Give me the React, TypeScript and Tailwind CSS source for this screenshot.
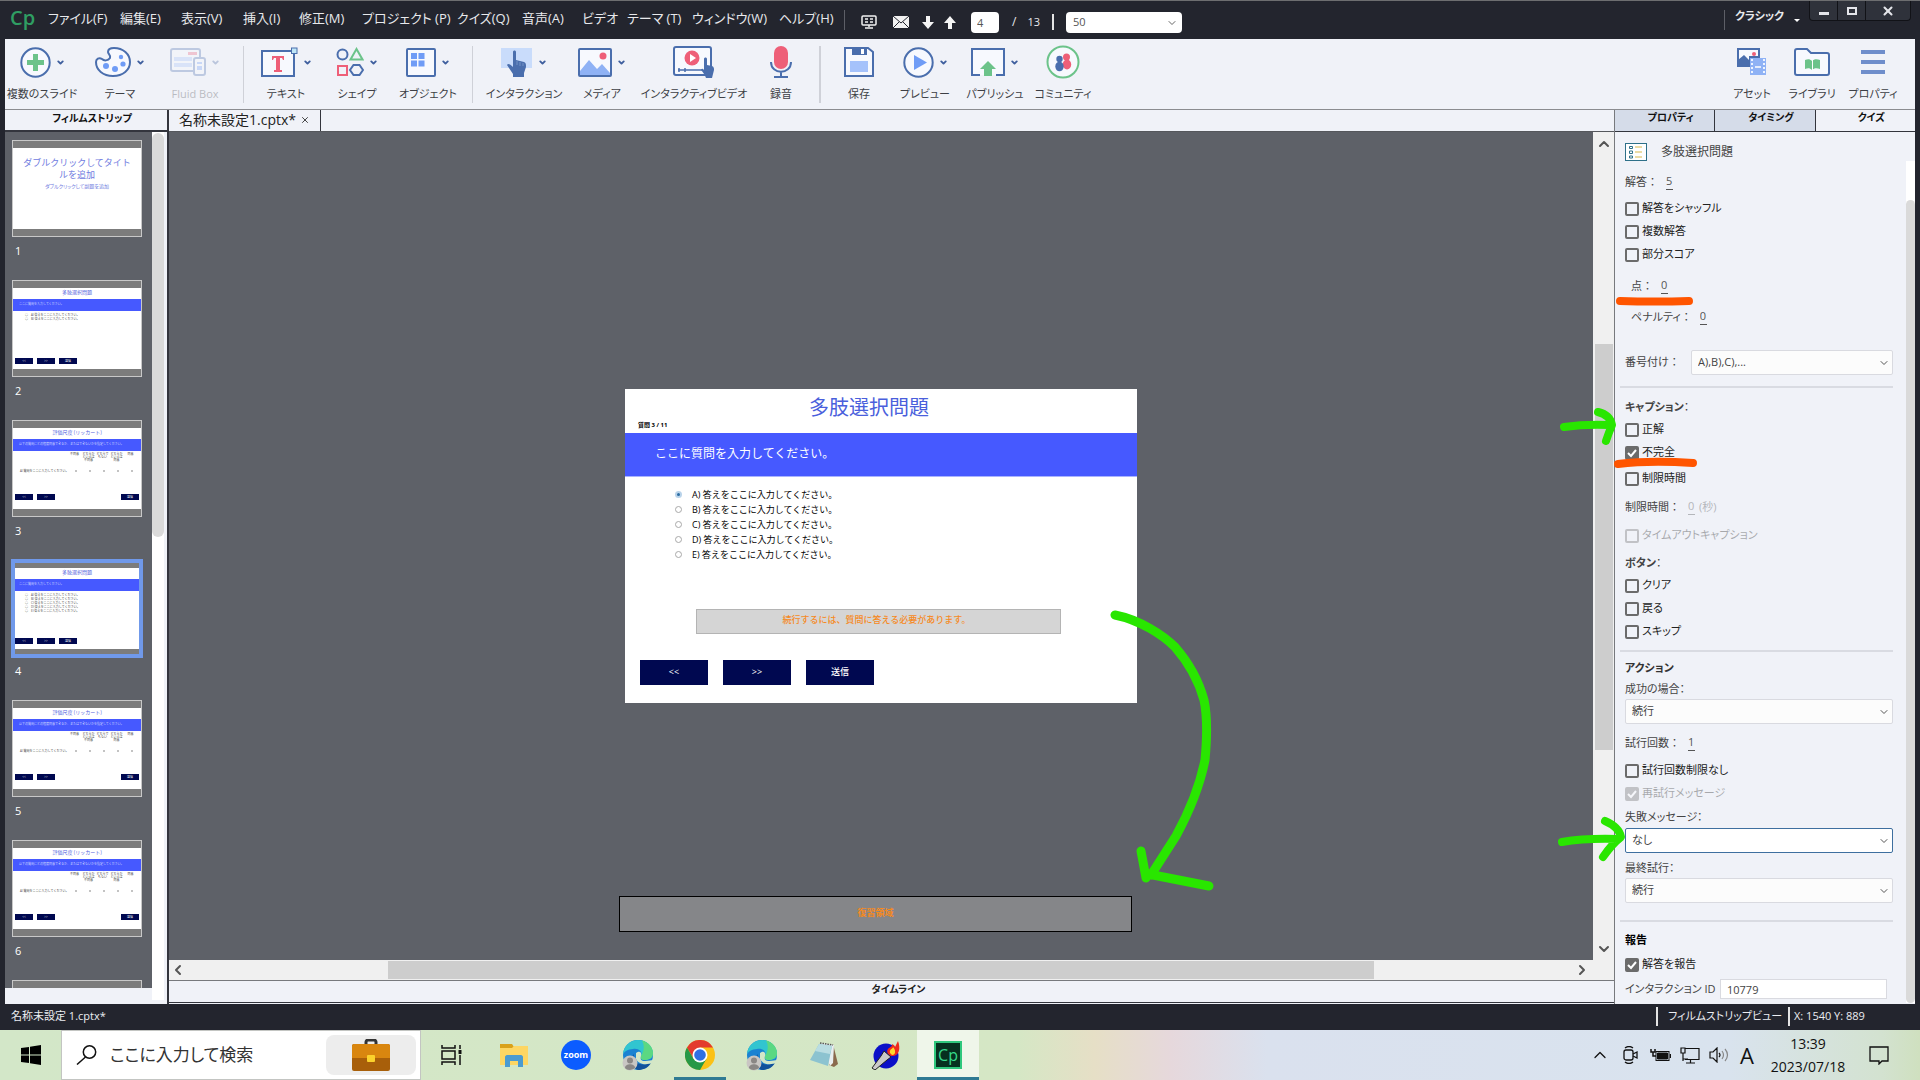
import type { ReactNode } from "react";
import { ChevronDown, ChevronLeft, ChevronRight, ChevronUp, X } from "lucide-react";

const BLUE = "#4a6ead";
const SKY = "#a5c2fb";
const RED = "#ee5f78";
const GREEN = "#6cc38a";

const menus = [
  { label: "ファイル(F)", width: "w-[72px]" },
  { label: "編集(E)", width: "w-[61px]" },
  { label: "表示(V)", width: "w-[62px]" },
  { label: "挿入(I)", width: "w-[56px]" },
  { label: "修正(M)", width: "w-[63px]" },
  { label: "プロジェクト (P)", width: "w-[95px]" },
  { label: "クイズ(Q)", width: "w-[65px]" },
  { label: "音声(A)", width: "w-[60px]" },
  { label: "ビデオ", width: "w-[45px]" },
  { label: "テーマ (T)", width: "w-[65px]" },
  { label: "ウィンドウ(W)", width: "w-[87px]" },
  { label: "ヘルプ(H)", width: "w-[65px]" },
];

const TitleBar = () => (
  <header className="flex h-[39px] shrink-0 items-start border-t border-[#6d6e70] bg-[#23252e] text-[13px] text-[#e8e9ec]">
    <span className="w-12 shrink-0 pl-[10px] text-xl leading-[34px] font-semibold text-[#2f9e63]">Cp</span>
    <nav className="flex">
      {menus.map((menu) => (
        <button key={menu.label} className={`h-9 shrink-0 text-left whitespace-nowrap ${menu.width}`}>
          {menu.label}
        </button>
      ))}
    </nav>
    <div className="mt-[9px] h-5 w-px bg-[#5d5f67]" />
    <div className="flex h-[42px] items-center text-xs">
      <button aria-label="レイアウト" className="ml-4">
        <svg width="16" height="14" viewBox="0 0 16 14" fill="none" stroke="#f2f2f2" strokeWidth="1.5">
          <rect x="1" y="1" width="14" height="9" rx="1" />
          <path d="M4 4h3M9 4h3M4 7h3M9 7h3M8 10v2M4 13h8" />
        </svg>
      </button>
      <button aria-label="メール" className="ml-4">
        <svg width="16" height="12" viewBox="0 0 16 12">
          <path d="M0 0h16v12H0z" fill="#f2f2f2" />
          <path d="M0 0l8 7 8-7M0 12l6-6M16 12l-6-6" stroke="#23252e" fill="none" />
        </svg>
      </button>
      <button aria-label="次のスライド" className="ml-[13px]">
        <svg width="12" height="13" viewBox="0 0 12 13" fill="#f5f5f5">
          <path d="M4 0h4v6h4l-6 7-6-7h4z" />
        </svg>
      </button>
      <button aria-label="前のスライド" className="ml-[10px]">
        <svg width="12" height="13" viewBox="0 0 12 13" fill="#f5f5f5">
          <path d="M4 13h4V7h4L6 0 0 7h4z" />
        </svg>
      </button>
      <input
        aria-label="スライド番号"
        defaultValue="4"
        className="ml-[15px] h-[21px] w-7 rounded-sm bg-white pl-[6px] text-[11px] text-[#555]"
      />
      <span className="ml-[13px]">/</span>
      <span className="ml-[11px] text-[11px]">13</span>
      <div className="ml-3 h-4 w-[2px] bg-[#e4e4e4]" />
      <div className="relative ml-3">
        <select aria-label="ズーム" className="h-[21px] w-[116px] appearance-none rounded-sm bg-white pl-[7px] text-[11px] text-[#555]">
          <option>50</option>
        </select>
        <ChevronDown className="pointer-events-none absolute top-[5px] right-1 size-3 text-[#666]" />
      </div>
    </div>
    <div className="ml-auto flex items-start">
      <div className="mt-[9px] h-5 w-px bg-[#5d5f67]" />
      <button className="ml-[10px] h-[30px] w-[52px] text-left text-[11px] font-bold whitespace-nowrap">クラシック</button>
      <span className="mt-[18px] ml-[7px] mr-[9px] border-x-3 border-t-3 border-x-transparent border-t-white" />
      <div className="mr-[9px] flex h-5 rounded-b-sm border border-t-0 border-[#111217] bg-[#2f323b] text-[#e4e5ea]">
        <button aria-label="最小化" className="flex w-7 items-end justify-center border-r border-[#111217] pb-[5px]">
          <span className="h-[3px] w-[10px] bg-[#e4e5ea]" />
        </button>
        <button aria-label="最大化" className="flex w-7 items-center justify-center border-r border-[#111217]">
          <span className="h-2 w-[10px] border-2 border-[#e4e5ea]" />
        </button>
        <button aria-label="閉じる" className="flex w-11 items-center justify-center">
          <X className="size-[14px]" strokeWidth={3.5} />
        </button>
      </div>
    </div>
  </header>
);

interface ToolProps {
  label: string;
  width: string;
  menu?: boolean;
  disabled?: boolean;
  children: ReactNode;
}

const Tool = ({ label, width, menu, disabled, children }: ToolProps) => (
  <button disabled={disabled} className={`flex shrink-0 flex-col items-center pt-[7px] ${width} ${disabled ? "opacity-30" : ""}`}>
    <span className="flex h-8 items-center gap-[5px]">
      {children}
      {menu && <ChevronDown className="size-[9px] text-[#3f5f9e]" strokeWidth={5} />}
    </span>
    <span className="mt-2 text-[11px] leading-4 whitespace-nowrap text-[#3d3f45]">{label}</span>
  </button>
);

const Toolbar = () => (
  <div className="flex h-[71px] shrink-0 border-b border-[#8b8c90] bg-[#f0f2f8]">
    <Tool label="複数のスライド" width="w-[74px]" menu>
      <svg width="31" height="31" viewBox="0 0 31 31">
        <circle cx="15.5" cy="15.5" r="14.2" fill="#f7f9fe" stroke={BLUE} strokeWidth="2" />
        <path d="M13 7h5v6h6v5h-6v6h-5v-6H7v-5h6z" fill={GREEN} />
      </svg>
    </Tool>
    <Tool label="テーマ" width="w-[82px]" menu>
      <svg width="36" height="30" viewBox="0 0 36 30">
        <path
          d="M19 1c9 0 16 6 16 14 0 8-7 14-17 14C8 29 1 23 1 15c0-3 3-5 6-3 2 2 6 2 8-1 1-3-2-4-2-6 0-3 3-4 6-4z"
          fill="#f7f9fe"
          stroke={BLUE}
          strokeWidth="2"
        />
        <g fill="#6f9cf6">
          <circle cx="11" cy="19" r="3" />
          <circle cx="20" cy="22" r="3" />
          <circle cx="28" cy="17" r="2.6" />
          <circle cx="26" cy="10" r="2.2" />
        </g>
      </svg>
    </Tool>
    <Tool label="Fluid Box" width="w-[68px]" menu disabled>
      <svg width="36" height="30" viewBox="0 0 36 30">
        <rect x="1" y="2" width="29" height="22" rx="2" fill="#f7f9fe" stroke={BLUE} strokeWidth="2" />
        <path d="M4 10h18v4H4zM4 16h18v4H4z" fill={SKY} />
        <path d="M18 5h9v3h-9z" fill={RED} />
        <rect x="24" y="11" width="11" height="17" rx="2" fill="#f7f9fe" stroke={BLUE} strokeWidth="2" />
        <path d="M27 15h5v2h-5zM27 19h5v4h-5z" fill="#6f9cf6" />
      </svg>
    </Tool>
    <div className="mx-[14px] mt-[7px] h-[57px] w-px bg-[#cfd1d8]" />
    <Tool label="テキスト" width="w-[56px]" menu>
      <svg width="37" height="30" viewBox="0 0 37 30">
        <rect x="1" y="4" width="32" height="25" fill="#f7f9fe" stroke={BLUE} strokeWidth="2" />
        <path d="M11 9h12v4h-1l-1-2h-2v12h2v2h-8v-2h2V11h-2l-1 2h-1z" fill={RED} />
        <rect x="30.500" y="1" width="5.500" height="5.500" fill="#bfe6f7" stroke={BLUE} />
      </svg>
    </Tool>
    <Tool label="シェイプ" width="w-[86px]" menu>
      <svg width="28" height="30" viewBox="0 0 28 30" fill="none" strokeWidth="2">
        <circle cx="6.500" cy="7.500" r="5" stroke={BLUE} />
        <path d="M20.500 2l6 10.500h-12z" stroke={GREEN} />
        <rect x="2" y="19" width="9" height="9" stroke={RED} />
        <path d="M17.500 18h6l3.500 5-3.500 5h-6L14 23z" stroke={BLUE} />
      </svg>
    </Tool>
    <Tool label="オブジェクト" width="w-[56px]" menu>
      <svg width="30" height="30" viewBox="0 0 30 30">
        <rect x="1" y="2" width="28" height="27" rx="1" fill="#f7f9fe" stroke={BLUE} strokeWidth="2" />
        <path d="M5 6h6v6H5zM12.500 6h6v6h-6zM5 13.500h6v6H5zM12.500 13.500h6v6h-6z" fill="#6f9cf6" />
      </svg>
    </Tool>
    <div className="mx-4 mt-[7px] h-[57px] w-px bg-[#cfd1d8]" />
    <Tool label="インタラクション" width="w-[70px]" menu>
      <svg width="32" height="30" viewBox="0 0 32 30">
        <path d="M0 1h31v20H0z" fill="#c9dcfb" />
        <path d="M12 5c0-2 3-2 3 0v8l8 2c2 1 2 2 2 5l-2 6v4H12v-3c-2-3-4-6-6-9 1-2 3-1 6 2z" fill={BLUE} />
        <path d="M16 14v4M19 15v4M22 16v3" stroke="#7f9ccc" strokeWidth=".8" />
      </svg>
    </Tool>
    <Tool label="メディア" width="w-[86px]" menu>
      <svg width="34" height="30" viewBox="0 0 34 30">
        <rect x="1" y="2" width="32" height="27" rx="1" fill="#f7f9fe" stroke={BLUE} strokeWidth="2" />
        <path d="M2 28V24l9-11 8 9 5-5 8 9v2z" fill="#8fb2f5" />
        <circle cx="25" cy="9" r="3.500" fill={RED} />
      </svg>
    </Tool>
    <Tool label="インタラクティブビデオ" width="w-[98px]">
      <svg width="42" height="32" viewBox="0 0 42 32">
        <rect x="1" y="1" width="37" height="28" rx="2" fill="#f7f9fe" stroke={BLUE} strokeWidth="2" />
        <circle cx="19" cy="12" r="7.500" fill={RED} />
        <path d="M17 8l6 4-6 4z" fill="#fff" />
        <path d="M5 24h25M6 22v4M12 22v4" stroke={BLUE} strokeWidth="1.500" />
        <path d="M31 13c0-2 3-2 3 0v6l5 1c2 1 2 2 2 4l-2 8h-6c-1-3-3-6-5-8 1-2 2-1 3 0z" fill={BLUE} />
      </svg>
    </Tool>
    <Tool label="録音" width="w-[76px]">
      <svg width="24" height="32" viewBox="0 0 24 32">
        <rect x="5" y="0" width="14" height="23" rx="7" fill={RED} />
        <path d="M2 16c0 13 20 13 20 0M12 26v5M5 31h14" stroke={BLUE} strokeWidth="2" fill="none" />
      </svg>
    </Tool>
    <div className="mt-[7px] h-[57px] w-[2px] bg-[#cfd1d8]" />
    <Tool label="保存" width="w-[76px]">
      <svg width="30" height="30" viewBox="0 0 30 30">
        <path d="M1 1h23l5 4v24H1z" fill="#f7f9fe" stroke={BLUE} strokeWidth="2" />
        <path d="M8 1h15v7H8z" fill={BLUE} />
        <path d="M17 2h3v5h-3z" fill="#fff" />
        <path d="M6 14h18v11H6z" fill={SKY} />
      </svg>
    </Tool>
    <Tool label="プレビュー" width="w-[56px]" menu>
      <svg width="31" height="31" viewBox="0 0 31 31">
        <circle cx="15.500" cy="15.500" r="14.200" fill="#f7f9fe" stroke={BLUE} strokeWidth="2" />
        <path d="M11 8l13 7.500L11 23z" fill="#6f9cf6" />
      </svg>
    </Tool>
    <Tool label="パブリッシュ" width="w-[84px]" menu>
      <svg width="34" height="30" viewBox="0 0 34 30">
        <path d="M9 28H1V2h32v26h-8" fill="#f7f9fe" stroke={BLUE} strokeWidth="2" />
        <path d="M17 14l8 8h-4v7h-8v-7H9z" fill={GREEN} />
      </svg>
    </Tool>
    <Tool label="コミュニティ" width="w-[52px]">
      <svg width="34" height="34" viewBox="0 0 34 34">
        <circle cx="17" cy="17" r="15.500" fill="#f7f9fe" stroke={GREEN} strokeWidth="2" />
        <circle cx="20.500" cy="12" r="3.500" fill={RED} />
        <ellipse cx="21" cy="19.500" rx="4.200" ry="5" fill={RED} />
        <circle cx="13.500" cy="14" r="3.200" fill={BLUE} />
        <ellipse cx="13.500" cy="21.500" rx="4.200" ry="4.800" fill={BLUE} />
      </svg>
    </Tool>
    <div className="flex-1" />
    <Tool label="アセット" width="w-[82px]">
      <svg width="30" height="28" viewBox="0 0 30 28">
        <path d="M1 1h21v8h-9v9H1z" fill="#f7f9fe" stroke={BLUE} strokeWidth="2" />
        <path d="M1 12l6-5 6 6v5H1z" fill={BLUE} />
        <circle cx="17" cy="6" r="2" fill={RED} />
        <path d="M13 10h16v17H13z" fill="#8fb2f5" />
        <path d="M15 11v16M27 11v16" stroke="#eef4ff" strokeWidth="2" strokeDasharray="2 2" />
        <path d="M18 19h6" stroke="#fff" strokeWidth="1.500" />
      </svg>
    </Tool>
    <Tool label="ライブラリ" width="w-[38px]">
      <svg width="36" height="28" viewBox="0 0 36 28">
        <path d="M1 3c0-1 1-2 2-2h10l4 4h16c1 0 2 1 2 2v18c0 1-1 2-2 2H3c-1 0-2-1-2-2z" fill="#f7f9fe" stroke={BLUE} strokeWidth="2" />
        <path d="M11 12c3-1 5-1 7 1 2-2 5-2 8-1v9c-3-1-6-1-8 1-2-2-4-2-7-1z" fill={GREEN} />
        <path d="M18.500 12v10" stroke="#fff" />
      </svg>
    </Tool>
    <Tool label="プロパティ" width="w-[84px]">
      <svg width="24" height="24" viewBox="0 0 24 24" fill="#6f8ecb">
        <path d="M0 0h24v4H0zM0 10h24v4H0zM0 20h24v4H0z" />
      </svg>
    </Tool>
  </div>
);

type SlideKind = "title" | "choice2" | "choice5" | "likert" | "blank";

const slides: { id: number; kind: SlideKind }[] = [
  { id: 1, kind: "title" },
  { id: 2, kind: "choice2" },
  { id: 3, kind: "likert" },
  { id: 4, kind: "choice5" },
  { id: 5, kind: "likert" },
  { id: 6, kind: "likert" },
  { id: 7, kind: "blank" },
];

const likertColumns = ["不同意", "どちらかといえば不同意", "どちらでもない", "どちらかといえば同意", "同意"];

const MiniButton = ({ label }: { label: string }) => (
  <span className="h-[6px] w-[18px] bg-[#000850] text-center text-[3px] leading-[6px] text-white">{label}</span>
);

const ThumbContent = ({ kind }: { kind: SlideKind }) => {
  if (kind === "blank") return <div className="flex-1 bg-white" />;

  if (kind === "title") {
    return (
      <div className="flex-1 bg-white pt-[9px] text-center text-[#6f7be0]">
        <p className="px-2 text-[9px] leading-3 [font-feature-settings:normal]">ダブルクリックしてタイトルを追加</p>
        <p className="text-[5px] leading-[10px]">ダブルクリックして副題を追加</p>
      </div>
    );
  }

  const likert = kind === "likert";
  const rows = kind === "choice2" ? ["A", "B"] : ["A", "B", "C", "D", "E"];

  return (
    <div className="flex flex-1 flex-col bg-white text-[3px] text-[#444] [font-feature-settings:normal]">
      <div className="h-[11px] text-center text-[5px] leading-[9px] text-[#5564dd]">{likert ? "評価尺度 (リッカート)" : "多肢選択問題"}</div>
      <div className="h-3 bg-[#4659ff] pl-[6px] leading-[10px] whitespace-nowrap text-[#cfd5ff]">
        {likert ? "以下の質問にどの程度同意できるか、またはできないかを指定してください。" : "ここに質問を入力してください。"}
      </div>
      {likert ? (
        <div className="pl-[7px]">
          <div className="flex h-[18px] justify-end gap-px pt-[2px] pr-1 text-center leading-[3px]">
            {likertColumns.map((col) => (
              <span key={col} className="w-[13px]">{col}</span>
            ))}
          </div>
          <div className="flex items-center justify-between pr-2">
            <span>A) 質問をここに入力してください。</span>
            <span className="flex gap-3">
              {likertColumns.map((col) => (
                <i key={col} className="size-[2px] rounded-full border border-[#999]" />
              ))}
            </span>
          </div>
        </div>
      ) : (
        <ul className="pt-[2px] pl-3 leading-1">
          {rows.map((r) => (
            <li key={r}>○　{r}) 答えをここに入力してください。</li>
          ))}
        </ul>
      )}
      <div className={`mt-auto flex gap-[4px] px-[2px] ${likert ? "mb-[9px]" : "mb-[5px]"}`}>
        <MiniButton label="<<" />
        <MiniButton label=">>" />
        {likert && <span className="flex-1" />}
        <MiniButton label="送信" />
      </div>
    </div>
  );
};

const Filmstrip = () => (
  <aside className="flex w-[162px] shrink-0 flex-col bg-[#f0f2f8]">
    <h2 className="h-[22px] shrink-0 border-b-2 border-[#33353d] pl-3 text-center text-[10px] leading-4 font-bold text-[#111]">フィルムストリップ</h2>
    <div className="flex min-h-0 flex-1">
      <div className="mb-4 w-[147px] overflow-hidden bg-[#5e6168] pt-2 pl-[7px]">
        {slides.map((slide) => {
          const selected = slide.id === 4;
          return (
            <div key={slide.id} className="h-[140px]">
              <button
                aria-label={`スライド ${slide.id}`}
                className={`flex h-[97px] w-[130px] flex-col overflow-hidden border border-[#c8c8c8] bg-[#7c7c7c] py-[7px] text-left ${selected ? "outline-4 -outline-offset-3 outline-[#7099ea]" : ""}`}
              >
                <span className="flex w-full flex-1 flex-col">
                  <ThumbContent kind={slide.kind} />
                </span>
              </button>
              {slide.kind !== "blank" && <p className="pt-[6px] pl-[3px] text-[11px] leading-4 text-white">{slide.id}</p>}
            </div>
          );
        })}
      </div>
      <div className="mb-1 w-3 bg-white">
        <div className="mt-px h-[404px] rounded-full bg-[#dadada]" />
      </div>
    </div>
  </aside>
);

const answers = ["A", "B", "C", "D", "E"];

const Slide = () => (
  <div className="relative h-[314px] w-[512px] shrink-0 bg-white [font-feature-settings:normal]">
    <div className="h-11 pt-[5px]">
      <h1 className="pr-6 text-center text-xl leading-7 text-[#4a5fdc]">多肢選択問題</h1>
      <p className="pl-[13px] text-[6px] leading-[7px] font-bold text-black">質問 3 / 11</p>
    </div>
    <div className="h-11 border-b border-[#a9b3ff] bg-[#4659ff] pl-[30px] text-xs leading-[41px] text-white">ここに質問を入力してください。</div>
    <div className="flex flex-col pt-[10px] pl-[50px]">
      {answers.map((letter) => (
        <label key={letter} className="flex h-[15px] items-center gap-[10px] text-[9px] leading-[15px] text-black">
          <input
            type="radio"
            name="answer"
            defaultChecked={letter === "A"}
            className="size-[7px] appearance-none rounded-full border border-[#a9a9a9] checked:border-2 checked:border-[#b9d3ea] checked:bg-[#2d6da3]"
          />
          {letter}) 答えをここに入力してください。
        </label>
      ))}
    </div>
    <p className="mt-[47px] ml-[71px] h-[25px] w-[365px] border border-[#b4b4b4] bg-[#d5d5d5] pr-1 text-center text-[9px] leading-5 font-medium text-[#f58a1f]">
      続行するには、質問に答える必要があります。
    </p>
    <div className="mt-[26px] ml-[15px] flex gap-[15px] text-[9px] font-medium text-white">
      <button className="h-[25px] w-[68px] bg-[#000850] pb-[2px]">&lt;&lt;</button>
      <button className="h-[25px] w-[68px] bg-[#000850] pb-[2px]">&gt;&gt;</button>
      <button className="h-[25px] w-[68px] bg-[#000850] pb-[2px]">送信</button>
    </div>

    {/* review area parked below the stage */}
    <div className="absolute top-[507px] -left-[6px] h-9 w-[513px] border border-black bg-[#858689] text-center text-[9px] leading-8 font-bold text-[#f58a1f]">
      復習領域
    </div>
    <svg className="pointer-events-none absolute top-0 left-0 overflow-visible" width="600" height="520" fill="none" stroke="#29e600" strokeWidth="9" strokeLinecap="round" strokeLinejoin="round">
      <path d="M490 226C515 231 538 246 550 258C564 274 574 293 579 311C583 330 582 350 580 371C575 396 563 425 551 447L526 486" />
      <path d="M516 462L521 489M523 485L584 497" />
    </svg>
  </div>
);

const Workspace = () => (
  <main className="flex min-w-0 flex-1 flex-col border-l-2 border-[#33353d] bg-[#f0f2f8]">
    <div className="flex h-[22px] shrink-0 border-b border-[#55575c]">
      <div className="flex w-[152px] items-center justify-between border-r border-[#33353d] px-[10px] pb-px text-sm whitespace-nowrap text-[#222]">
        名称未設定1.cptx*
        <button aria-label="タブを閉じる">
          <X className="size-[10px]" />
        </button>
      </div>
    </div>
    <div className="flex min-h-0 flex-1">
      <div className="flex min-w-0 flex-1 items-center justify-center bg-[#5e6168]">
        <Slide />
      </div>
      <div className="flex w-[21px] shrink-0 flex-col items-center bg-[#f0f0f0] text-[#555]">
        <ChevronUp className="mt-1 size-4 shrink-0" strokeWidth={3} />
        <div className="flex w-[18px] flex-1 flex-col">
          <div className="flex-[192]" />
          <div className="flex-[404] bg-[#cdcdcd]" />
          <div className="flex-[191]" />
        </div>
        <ChevronDown className="mb-[3px] size-4 shrink-0" strokeWidth={3} />
      </div>
    </div>
    <div className="flex h-[21px] shrink-0 items-center border-b border-[#77797d] bg-[#f0f0f0] pr-[21px] text-[#555]">
      <ChevronLeft className="ml-px size-4" strokeWidth={3} />
      <div className="flex h-[18px] flex-1">
        <div className="flex-[202]" />
        <div className="flex-[984] bg-[#cdcdcd]" />
        <div className="flex-[200]" />
      </div>
      <ChevronRight className="mr-[3px] size-4" strokeWidth={3} />
    </div>
    <h2 className="mb-px h-[22px] shrink-0 border-b border-[#33353d] pl-[14px] text-center text-[10px] leading-4 font-bold text-[#222]">タイムライン</h2>
  </main>
);

interface CheckProps {
  label: string;
  checked?: boolean;
  disabled?: boolean;
  className?: string;
}

const Check = ({ label, checked, disabled, className = "" }: CheckProps) => (
  <label className={`relative flex h-[23px] items-center gap-[3px] text-[11px] text-[#222] ${disabled ? "opacity-35" : ""} ${className}`}>
    <input
      type="checkbox"
      defaultChecked={checked}
      disabled={disabled}
      className="peer size-[14px] appearance-none rounded-xs border-2 border-[#6b6b6b] checked:bg-[#6b6b6b]"
    />
    <svg className="pointer-events-none absolute left-0 hidden peer-checked:block" width="14" height="14" fill="none" stroke="#fff" strokeWidth="2">
      <path d="M3 7l3 3 5-6" />
    </svg>
    {label}
  </label>
);

const Colon = () => <span className="[font-feature-settings:normal]">：</span>;

const HotValue = ({ label, value, unit, disabled, className = "" }: { label: string; value: string; unit?: string; disabled?: boolean; className?: string }) => (
  <label className={`flex h-6 items-center text-[11px] text-[#444] ${className}`}>
    {label}
    <Colon />
    <input
      defaultValue={value}
      disabled={disabled}
      className={`ml-2 h-4 w-[7px] border-b border-current ${disabled ? "text-[#b4b6bb]" : "text-[#555]"}`}
    />
    {unit && <span className="pl-1 text-[#b4b6bb]">{unit}</span>}
  </label>
);

const Dropdown = ({ label, value, active, className = "" }: { label: string; value: string; active?: boolean; className?: string }) => (
  <div className={`relative ${className}`}>
    <select
      aria-label={label}
      className={`block h-[25px] w-full appearance-none rounded-xs border pl-[6px] text-[11px] text-[#444] ${active ? "border-[#3e6f9f] bg-white" : "border-[#d9dae0] bg-[#fcfcfc]"}`}
    >
      <option>{value}</option>
    </select>
    <ChevronDown className="pointer-events-none absolute top-[7px] right-[3px] size-3 text-[#555]" />
  </div>
);

const Rule = ({ className }: { className: string }) => <div className={`-ml-[5px] h-[2px] bg-[#d9dbe2] ${className}`} />;

const QuizPanel = () => (
  <aside className="relative flex w-[301px] shrink-0 flex-col border-l border-[#77797d] bg-[#f0f2f8]">
    <div className="flex h-[22px] shrink-0 border-b border-[#33353d] text-[10px] font-bold text-[#111]">
      <button className="flex-1 border-r border-[#33353d] bg-[#d5dce9] pb-[6px] pl-3">プロパティ</button>
      <button className="flex-1 border-r border-[#33353d] bg-[#d5dce9] pb-[6px] pl-3">タイミング</button>
      <button className="flex-1 pb-[6px] pl-3">クイズ</button>
    </div>
    <div className="flex min-h-0 flex-1">
      <form className="min-w-0 flex-1 overflow-hidden pr-[13px] pl-[10px]">
        <div className="mt-2 flex h-6 items-center gap-[14px] text-xs text-[#444]">
          <svg width="22" height="18" viewBox="0 0 22 18">
            <rect x=".5" y=".5" width="21" height="17" fill="#fff" stroke="#2e7089" />
            <path d="M4.500 3.500h3v2h-3zM4.500 8h3v2.500h-3zM4.500 13h3v2h-3z" fill="#fff" stroke="#2e7089" />
            <path d="M10 4h7M10 9h7M10 14h7" stroke="#d9b84a" />
          </svg>
          多肢選択問題
        </div>
        <HotValue label="解答" value="5" className="mt-[6px]" />
        <Check label="解答をシャッフル" className="mt-[3px]" />
        <Check label="複数解答" />
        <Check label="部分スコア" />
        <HotValue label="点" value="0" className="mt-2 ml-[6px]" />
        <HotValue label="ペナルティ" value="0" className="mt-[7px] ml-[6px]" />
        <div className="mt-[21px] flex items-center">
          <span className="w-[66px] text-[11px] whitespace-nowrap text-[#444]">番号付け<Colon /></span>
          <Dropdown label="番号付け" value="A),B),C),..." className="flex-1" />
        </div>
        <Rule className="mt-[11px]" />
        <h3 className="mt-2 text-[11px] leading-[22px] text-[#444]"><b>キャプション</b>：</h3>
        <Check label="正解" />
        <Check label="不完全" checked />
        <Check label="制限時間" className="mt-[3px]" />
        <HotValue label="制限時間" value="0" unit="(秒)" disabled className="mt-[5px]" />
        <Check label="タイムアウトキャプション" disabled className="mt-[5px]" />
        <h3 className="mt-[5px] text-[11px] leading-[22px] text-[#444]"><b>ボタン</b>：</h3>
        <Check label="クリア" />
        <Check label="戻る" />
        <Check label="スキップ" />
        <Rule className="mt-[7px]" />
        <h3 className="mt-[5px] text-[11px] leading-[22px] font-bold text-[#333]">アクション</h3>
        <p className="text-[11px] leading-5 text-[#444]">成功の場合：</p>
        <Dropdown label="成功の場合" value="続行" />
        <HotValue label="試行回数" value="1" className="mt-[7px]" />
        <Check label="試行回数制限なし" className="mt-1" />
        <Check label="再試行メッセージ" checked disabled />
        <p className="mt-px text-[11px] leading-[22px] text-[#444]">失敗メッセージ：</p>
        <Dropdown label="失敗メッセージ" value="なし" active />
        <p className="mt-[5px] text-[11px] leading-5 text-[#444]">最終試行：</p>
        <Dropdown label="最終試行" value="続行" />
        <Rule className="mt-[17px]" />
        <h3 className="mt-[7px] text-[11px] leading-[22px] font-bold text-black">報告</h3>
        <Check label="解答を報告" checked className="mt-[2px]" />
        <label className="mt-[3px] flex items-center text-[11px] text-[#444]">
          <span className="w-[95px] whitespace-nowrap">インタラクション ID</span>
          <input defaultValue="10779" className="mr-[6px] h-5 min-w-0 flex-1 border border-[#d9dae0] bg-white pl-[6px]" />
        </label>
      </form>
      <div className="mt-[29px] mb-px w-[9px] bg-white pt-[39px]">
        <div className="h-full rounded-full bg-[#dadada]" />
      </div>
    </div>

    {/* pen marks */}
    <svg className="pointer-events-none absolute top-0 left-0 overflow-visible" width="300" height="760" fill="none" strokeWidth="8" strokeLinecap="round" strokeLinejoin="round">
      <g stroke="#29e600">
        <path d="M-51 317Q-30 314-6 315M-17 302Q-5 305-3 315Q-6 322-9 331" />
        <path d="M-53 732Q-30 728 3 729M-10 711Q4 717 6 727Q-3 734-12 747" />
      </g>
      <g stroke="#ff5500">
        <path d="M5 191Q40 192 74 191" />
        <path d="M3 354Q35 350 78 353" />
      </g>
    </svg>
  </aside>
);

const StatusBar = () => (
  <footer className="flex h-[26px] shrink-0 items-center bg-[#23252e] pb-[2px] text-[11px] text-[#eceef2]">
    <span className="pl-[11px] text-[11px]">名称未設定 1.cptx*</span>
    <span className="ml-auto flex h-[19px] w-[132px] items-center border-l-2 border-[#e4e4e4] pl-[10px] whitespace-nowrap">フィルムストリップビュー</span>
    <span className="flex h-[19px] w-[132px] items-center border-l-2 border-[#e4e4e4] pl-[4px]">X: 1540 Y: 889</span>
  </footer>
);

const EdgeIcon = () => (
  <svg width="32" height="32" viewBox="0 0 32 32">
    <circle cx="16" cy="16" r="15" fill="#1a82d2" />
    <path d="M1 15C2 6 9 1 16 1c9 0 15 7 15 13 0 5-4 7-8 7-4 0-5-2-4-4 2-5-3-8-8-7-5 0-9 3-10 5z" fill="#31c5d0" />
    <path d="M20 1.500C27 3 31 9 31 14c0 5-4 7-8 7-4 0-5-2-4-4 4-6 3-12 1-15.500z" fill="#5bd882" />
    <path d="M12 15c-2 8 6 13 17 9-3 5-8 7-13 7-7-2-9-11-4-16z" fill="#12529b" />
    <path d="M14 14c4-3 6 0 5 3-1 3 0 5 4 5 4 0 6-1 8-1l-1 3c-5 2-13 2-16-4z" fill="#d3e7c8" />
    <circle cx="8" cy="24" r="7.500" fill="#c9c6c3" />
    <circle cx="8" cy="21.500" r="3" fill="#8a8785" />
    <path d="M3 29c0-5 10-5 10 0-2 2-8 3-10 0z" fill="#8a8785" />
  </svg>
);

const taskbarApps: { name: string; running?: boolean; active?: boolean; icon: ReactNode }[] = [
  {
    name: "タスクビュー",
    icon: (
      <svg width="22" height="20" viewBox="0 0 22 20" fill="none" stroke="#111" strokeWidth="1.500">
        <path d="M1 0v3h13V0M1 20v-3h13v3M1 6h13v8H1zM19 0v4M19 10v10" />
        <path d="M19 5v4" strokeWidth="3" />
      </svg>
    ),
  },
  {
    name: "エクスプローラー",
    icon: (
      <svg width="28" height="24" viewBox="0 0 28 24">
        <path d="M0 1h12l2 3-2 3H0z" fill="#d9a21b" />
        <path d="M0 5h12l2-2h14v19H0z" fill="#fdd663" />
        <path d="M5 24V14c0-1 1-2 2-2h14c1 0 2 1 2 2v10h-5v-6h-8v6z" fill="#4b9bd0" />
      </svg>
    ),
  },
  {
    name: "Zoom",
    icon: <span className="flex size-[30px] items-center justify-center rounded-full bg-[#0b5cff] text-[9px] font-bold text-white">zoom</span>,
  },
  { name: "Edge", icon: <EdgeIcon /> },
  {
    name: "Chrome",
    running: true,
    icon: (
      <svg width="30" height="30" viewBox="0 0 30 30">
        <circle cx="15" cy="15" r="15" fill="#fbc116" />
        <path d="M2 7.500A15 15 0 0 1 28 7.500H15L8.500 18.500z" fill="#e33b2e" />
        <path d="M2 7.500A15 15 0 0 0 15 30L21.500 18.800 15 22 8.500 18.800z" fill="#279847" />
        <circle cx="15" cy="15" r="7.500" fill="#fff" />
        <circle cx="15" cy="15" r="5.800" fill="#2f6fe4" />
      </svg>
    ),
  },
  { name: "Edge 2", icon: <EdgeIcon /> },
  {
    name: "メモ帳",
    icon: (
      <svg width="28" height="28" viewBox="0 0 28 28">
        <path d="M23 3l5 20-4 3-5-2z" fill="#8a6a4d" />
        <path d="M11 2l13 2-1 18-3 3z" fill="#e9eef0" />
        <path d="M9 3l13 2-4 20-18-6z" fill="#8cc3d0" />
        <path d="M9 3l13 2-2 8-15-3z" fill="#b9dde2" />
        <path d="M10 2l13 2" stroke="#555" strokeWidth="1.500" strokeDasharray="1.500 1" />
      </svg>
    ),
  },
  {
    name: "ペイント",
    icon: (
      <svg width="30" height="30" viewBox="0 0 30 30">
        <circle cx="15" cy="16" r="12.500" fill="#0b10c8" />
        <path d="M17 14c-3-7 5-6 4-10 2 1 3 2 3 3l3-6c3 8 1 16-7 15z" fill="#ef2a1c" />
        <path d="M19 13c-1-4 3-4 3-6 3 3 3 8-1 8z" fill="#ffd92e" />
        <path d="M13 11l7 6-4 3L4 30l-3-2 9-12z" fill="#c9c9c9" stroke="#222" />
      </svg>
    ),
  },
  {
    name: "Captivate",
    running: true,
    active: true,
    icon: (
      <span className="flex h-7 w-7 items-center justify-center border-2 border-[#2fc77d] bg-[#06301f] text-base leading-none text-[#35d98a]">Cp</span>
    ),
  },
];

const Taskbar = () => (
  <div className="flex h-[50px] shrink-0 bg-linear-[90deg,#d3e7c8_0%,#d5e7c5_53%,#e6dfc6_57%,#e6d8dc_61%,#dae1ee_66%,#d9e3ee_90%,#d3e2d0_98%,#cfe0bf_100%]">
    <button aria-label="スタート" className="flex w-[61px] items-center justify-center">
      <svg width="20" height="20" viewBox="0 0 20 20">
        <path d="M0 3l8-1v7.500H0zM9 1.800L20 0v9.500H9zM0 10.500h8V18l-8-1zM9 10.500h11V20L9 18.200z" />
      </svg>
    </button>
    <div className="flex w-[360px] items-center border border-[#c3c5c2] bg-white pl-[14px] pr-1">
      <svg width="21" height="20" viewBox="0 0 21 20" fill="none" stroke="#111" strokeWidth="1.500">
        <circle cx="13.500" cy="7" r="6.200" />
        <path d="M9.500 12L1 19.500" />
      </svg>
      <input aria-label="検索" placeholder="ここに入力して検索" className="ml-[13px] min-w-0 flex-1 text-[17px] placeholder:text-[#333]" />
      <span className="flex h-10 w-[90px] items-center justify-center rounded-lg bg-[#ededed]">
        <svg width="38" height="32" viewBox="0 0 38 32">
          <path d="M14 6V3c0-1 1-2 2-2h6c1 0 2 1 2 2v3" fill="none" stroke="#333" strokeWidth="3" />
          <rect y="5" width="38" height="27" rx="2" fill="#a85f0a" />
          <path d="M0 7c0-1 1-2 2-2h34c1 0 2 1 2 2v12H0z" fill="#d9860f" />
          <rect x="15" y="16" width="8" height="7" rx="1" fill="#fbd22c" />
        </svg>
      </span>
    </div>
    {taskbarApps.map((app) => (
      <button
        key={app.name}
        aria-label={app.name}
        className={`flex w-[62px] shrink-0 flex-col items-center justify-between ${app.active ? "bg-[#eff6ea]" : ""}`}
      >
        <span className="flex h-[49px] items-center justify-center">{app.icon}</span>
        {app.running && <span className={`-mt-[2px] h-[3px] bg-[#2f7a93] ${app.active ? "w-full" : "w-[52px]"}`} />}
      </button>
    ))}
    <div className="ml-auto flex items-center text-[#111]">
      <ChevronUp className="size-5" strokeWidth={1.5} />
      <svg className="ml-3" width="17" height="18" viewBox="0 0 17 18" fill="none" stroke="currentColor" strokeWidth="1.300">
        <rect x="2" y="4" width="9" height="10" rx="2" />
        <path d="M11 8l4-2v6l-4-2M3 2Q7-1 11 2M3 16q4 3 8 0" />
      </svg>
      <svg className="ml-[11px]" width="21" height="14" viewBox="0 0 21 14" fill="none" stroke="currentColor">
        <rect x="6" y="3.500" width="13" height="9" />
        <path d="M7.500 5h10v6h-10z" fill="currentColor" />
        <path d="M20.500 6v4M1 1v3h4V1M3 4v4h3" strokeWidth="1.500" />
      </svg>
      <svg className="ml-[9px]" width="20" height="17" viewBox="0 0 20 17" fill="none" stroke="currentColor" strokeWidth="1.200">
        <path d="M5 1.500h14v11H5M3 8v6M6 16h9M10.500 13v3M1 1h4v5H1zM3 6v6h5" />
      </svg>
      <svg className="ml-[9px]" width="21" height="16" viewBox="0 0 21 16" fill="none" stroke="currentColor" strokeWidth="1.200">
        <path d="M1 5h3l4-4v14l-4-4H1zM10 6q2 2 0 4" />
        <path d="M13 4q3 4 0 8M16 2q5 6 0 12" stroke="#888" />
      </svg>
      <span className="ml-[10px] w-4 text-[22px]">A</span>
      <p className="ml-[13px] w-[78px] text-center text-sm leading-[23px]">
        13:39
        <br />
        2023/07/18
      </p>
      <button aria-label="通知" className="mr-[31px] ml-[22px]">
        <svg width="20" height="19" viewBox="0 0 20 19" fill="none" stroke="currentColor" strokeWidth="1.300">
          <path d="M1 1h18v14h-6l-3 3v-3H1z" />
        </svg>
      </button>
    </div>
  </div>
);

const App = () => (
  <div
    lang="ja"
    className="flex h-screen min-h-[700px] flex-col overflow-hidden bg-[#23252e] font-['Open_Sans','Noto_Sans_CJK_JP',sans-serif] [font-feature-settings:'palt']"
  >
    <TitleBar />
    <div className="flex min-h-0 flex-1 flex-col px-[5px]">
      <Toolbar />
      <div className="flex min-h-0 flex-1">
        <Filmstrip />
        <Workspace />
        <QuizPanel />
      </div>
    </div>
    <StatusBar />
    <Taskbar />
  </div>
);

export default App;
